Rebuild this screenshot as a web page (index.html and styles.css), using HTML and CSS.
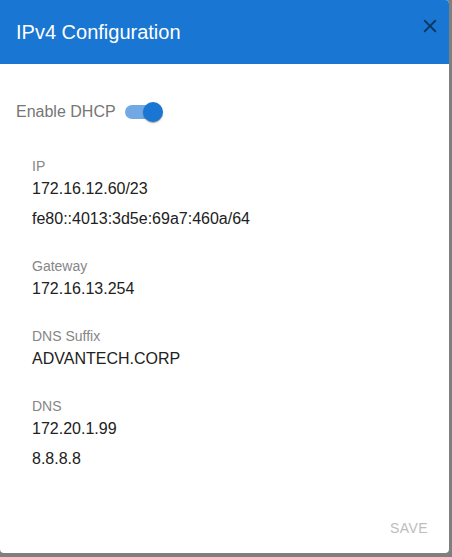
FILE: index.html
```html
<!DOCTYPE html>
<html lang="en">
<head>
<meta charset="utf-8">
<title>IPv4 Configuration</title>
<link rel="stylesheet" href="styles.css">
</head>
<body>
<div class="dialog">
  <header class="header">
    <h2 class="title">IPv4 Configuration</h2>
    <svg class="close" viewBox="0 0 24 24" aria-label="Close"><path d="M19 6.41L17.59 5 12 10.59 6.41 5 5 6.41 10.59 12 5 17.59 6.41 19 12 13.41 17.59 19 19 17.59 13.41 12z"/></svg>
  </header>
  <main class="content">
    <div class="dhcp-row">
      <span class="dhcp-label">Enable DHCP</span>
      <span class="switch"><span class="track"></span><span class="thumb"></span></span>
    </div>
    <div class="fields">
      <div class="field">
        <div class="field-label">IP</div>
        <div class="field-value">172.16.12.60/23</div>
        <div class="field-value">fe80::4013:3d5e:69a7:460a/64</div>
      </div>
      <div class="field">
        <div class="field-label">Gateway</div>
        <div class="field-value">172.16.13.254</div>
      </div>
      <div class="field">
        <div class="field-label">DNS Suffix</div>
        <div class="field-value">ADVANTECH.CORP</div>
      </div>
      <div class="field">
        <div class="field-label">DNS</div>
        <div class="field-value">172.20.1.99</div>
        <div class="field-value">8.8.8.8</div>
      </div>
    </div>
  </main>
  <footer class="actions">
    <button class="save" disabled>Save</button>
  </footer>
</div>
</body>
</html>
```
FILE: styles.css
```css
html, body {
  margin: 0;
  padding: 0;
}
body {
  background: #7f7f7f;
  font-family: "Liberation Sans", Arial, sans-serif;
  width: 452px;
  height: 557px;
  overflow: hidden;
}
.dialog {
  width: 449px;
  height: 553px;
  background: #fff;
  border-radius: 0 4px 4px 4px;
  overflow: hidden;
  display: flex;
  flex-direction: column;
}
.header {
  height: 64px;
  flex: none;
  background: #1976d2;
  display: flex;
  align-items: center;
  justify-content: space-between;
  padding: 0 8px 0 16px;
}
.title {
  margin: 0;
  font-size: 20px;
  line-height: 32px;
  font-weight: 400;
  color: #fff;
}
.close {
  width: 22px;
  height: 22px;
  align-self: flex-start;
  margin-top: 15px;
  fill: #0b3661;
}
.content {
  padding: 29px 0 0 16px;
}
.dhcp-row {
  display: flex;
  align-items: center;
  height: 38px;
}
.dhcp-label {
  font-size: 16px;
  line-height: 24px;
  color: #767676;
}
.switch {
  position: relative;
  width: 58px;
  height: 38px;
  margin-left: -3px;
}
.track {
  position: absolute;
  left: 12px;
  top: 12px;
  width: 34px;
  height: 14px;
  border-radius: 7px;
  background: #72a9e5;
}
.thumb {
  position: absolute;
  left: 30px;
  top: 9px;
  width: 20px;
  height: 20px;
  border-radius: 50%;
  background: #1976d2;
  box-shadow: 0 2px 1px -1px rgba(0,0,0,.2), 0 1px 1px 0 rgba(0,0,0,.14), 0 1px 3px 0 rgba(0,0,0,.12);
}
.fields {
  margin-top: 25px;
  padding-left: 16px;
}
.field + .field {
  margin-top: 25px;
}
.field-label {
  font-size: 14px;
  line-height: 20px;
  color: #868686;
  margin-bottom: 1px;
}
.field-value {
  font-size: 16px;
  line-height: 24px;
  color: #212121;
}
.field-value + .field-value {
  margin-top: 6px;
}
.actions {
  margin-top: auto;
  padding: 8px;
  display: flex;
  justify-content: flex-end;
}
.save {
  min-width: 64px;
  padding: 7px 8px 5px;
  border: none;
  background: none;
  font-family: "Liberation Sans", Arial, sans-serif;
  font-size: 14px;
  line-height: 24.5px;
  letter-spacing: 0.4px;
  text-transform: uppercase;
  color: #bdbdbd;
}
```
